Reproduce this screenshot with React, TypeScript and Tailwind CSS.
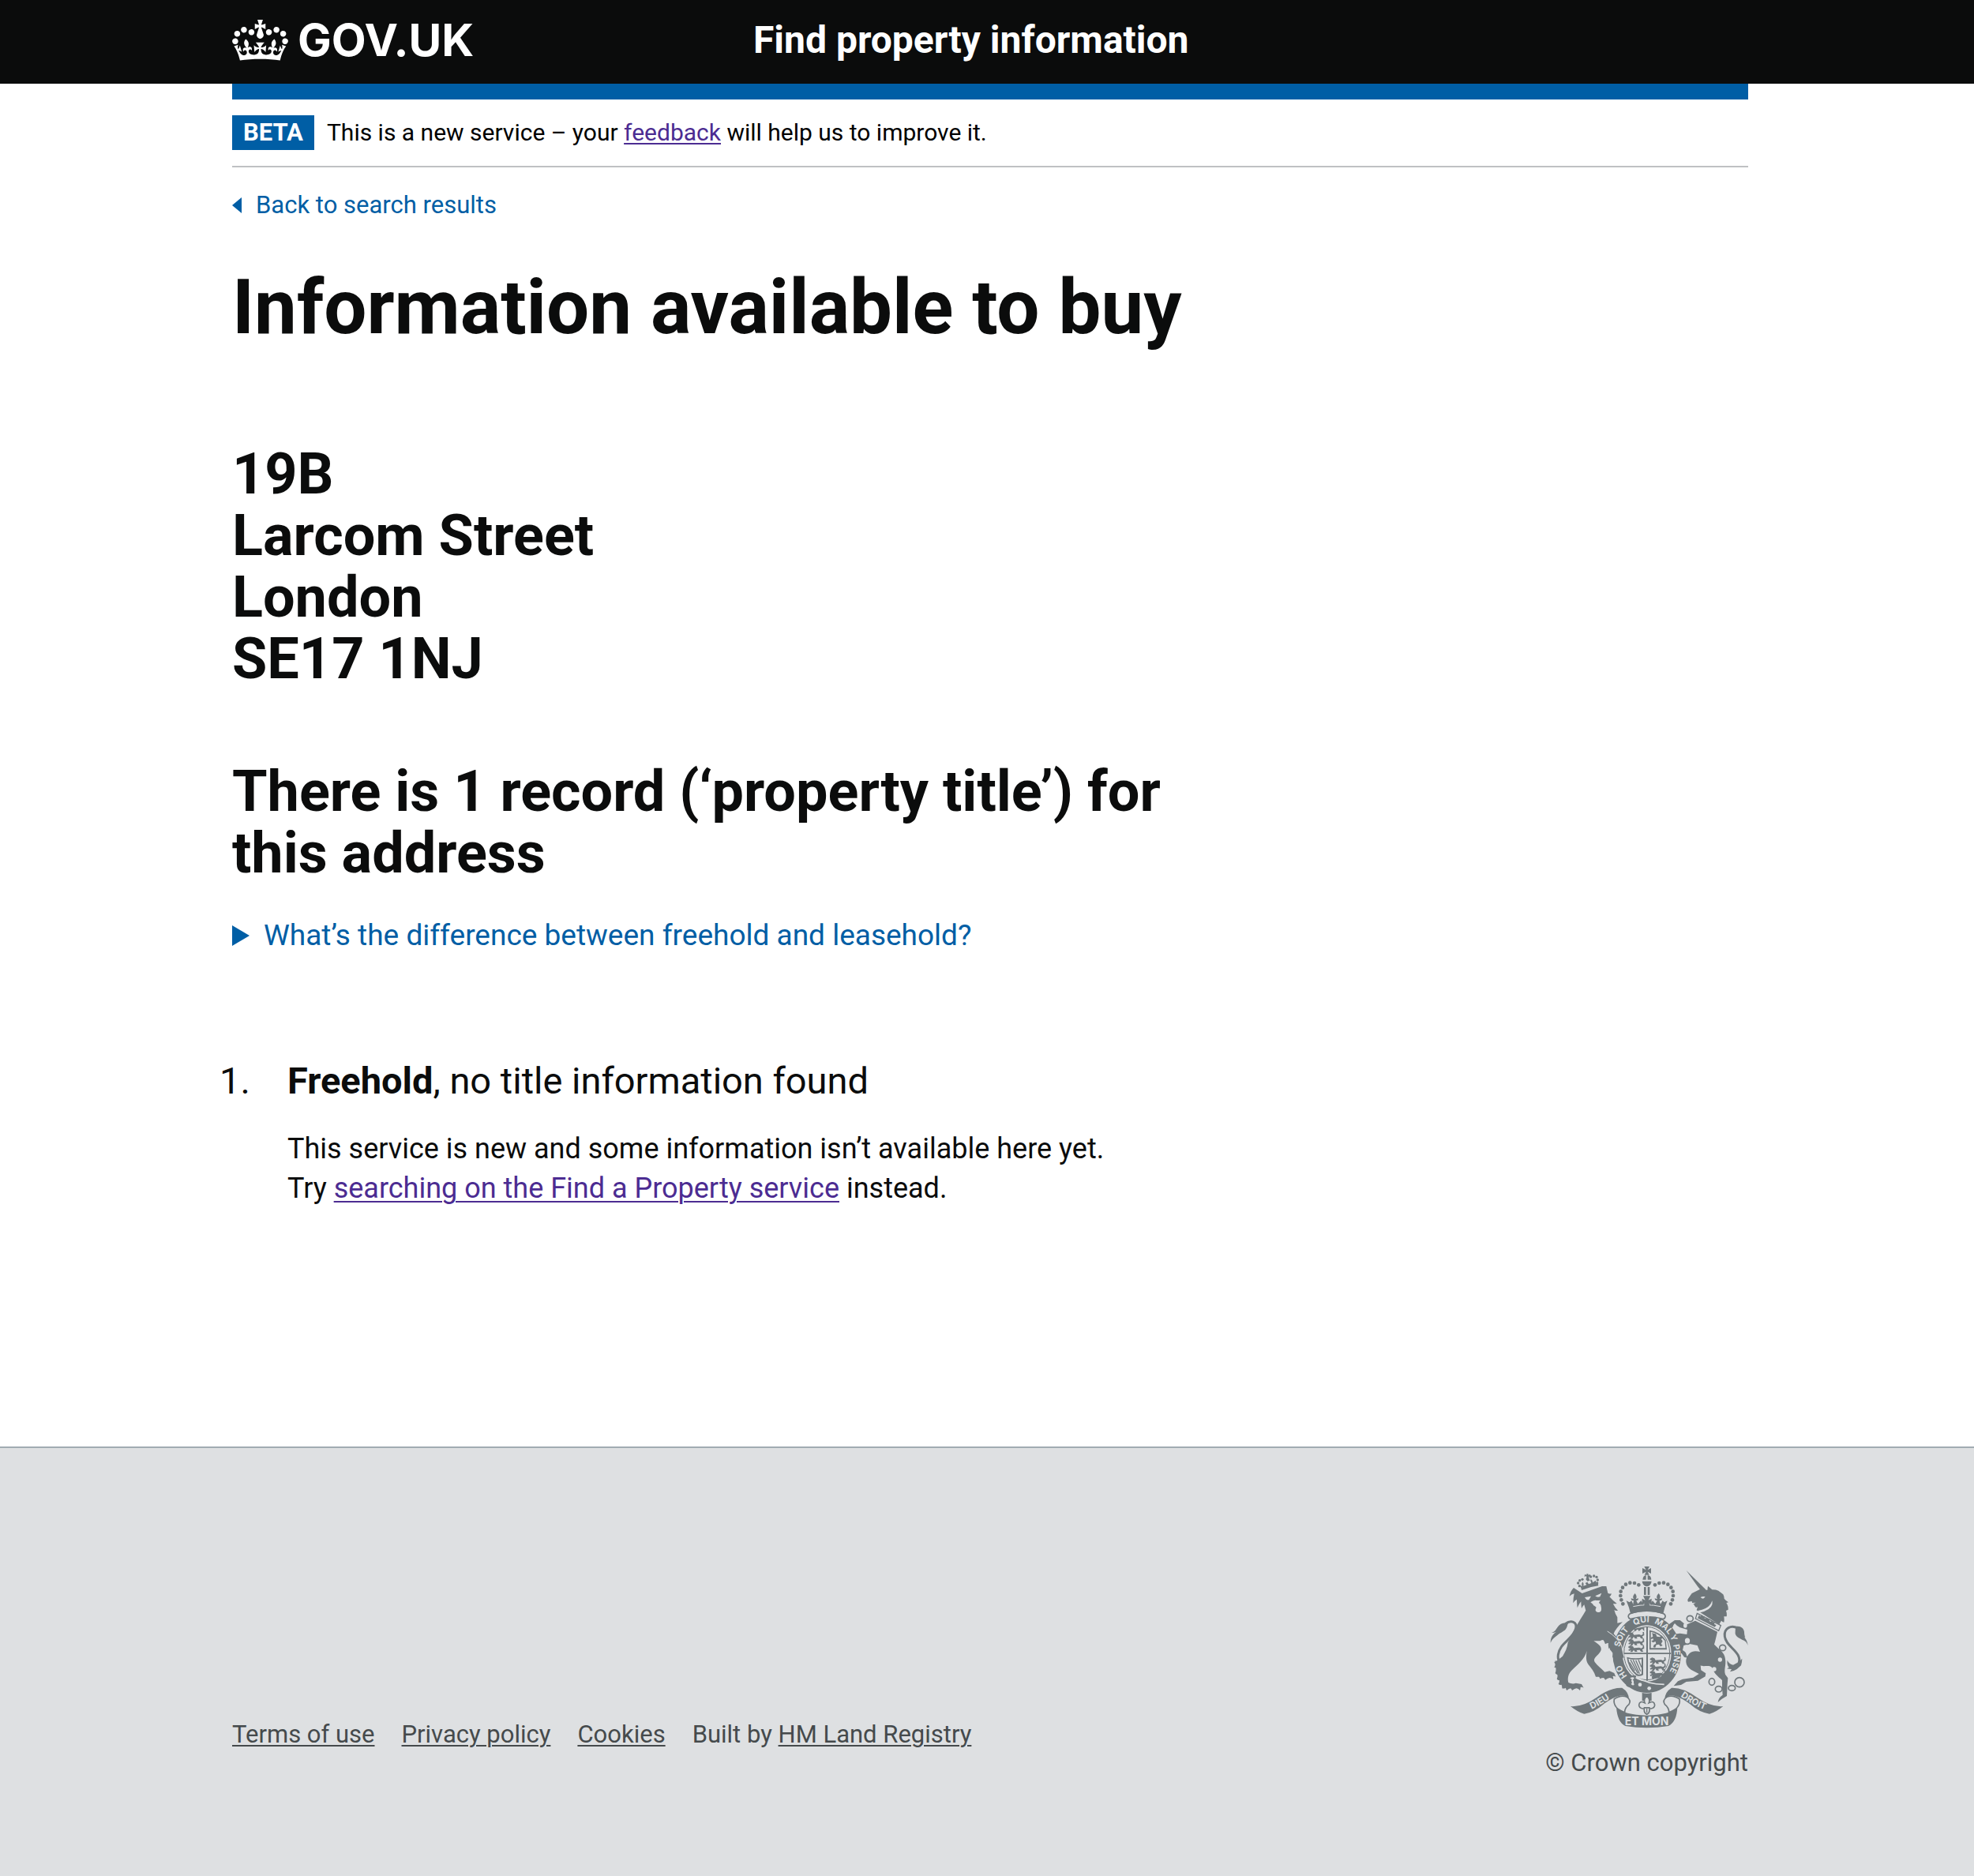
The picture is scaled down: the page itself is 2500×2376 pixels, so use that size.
import type { ReactNode } from 'react';

const INK = '#6f777b';
const PAPER = '#dee0e2';

function CrownLogo() {
  return (
    <svg viewBox="0 0 132 97" className="h-[52px] w-[71px] shrink-0" fill="currentColor" aria-hidden="true">
      <path
        fillRule="evenodd"
        d="M25 30.2c3.5 1.5 7.7-.2 9.1-3.7 1.5-3.6-.2-7.8-3.9-9.2-3.6-1.4-7.6.3-9.1 3.9-1.4 3.5.3 7.5 3.9 9zM9 39.5c3.6 1.5 7.8-.2 9.2-3.7 1.5-3.6-.2-7.8-3.9-9.1-3.6-1.5-7.6.2-9.1 3.8-1.4 3.5.3 7.5 3.8 9zM4.4 57.2c3.5 1.5 7.7-.2 9.1-3.8 1.5-3.6-.2-7.7-3.9-9.1-3.5-1.5-7.6.3-9.1 3.8-1.4 3.5.3 7.6 3.9 9.1zm38.3-21.4c3.5 1.5 7.7-.2 9.1-3.8 1.5-3.6-.2-7.7-3.9-9.1-3.6-1.5-7.6.3-9.1 3.8-1.3 3.6.4 7.7 3.9 9.1zm64.4-5.6c-3.6 1.5-7.8-.2-9.1-3.7-1.5-3.6.2-7.8 3.8-9.2 3.6-1.4 7.7.3 9.2 3.9 1.3 3.5-.4 7.5-3.9 9zm15.9 9.3c-3.6 1.5-7.7-.2-9.1-3.7-1.5-3.6.2-7.8 3.7-9.1 3.6-1.5 7.7.2 9.2 3.8 1.5 3.5-.3 7.5-3.8 9zm4.7 17.7c-3.6 1.5-7.8-.2-9.2-3.8-1.5-3.6.2-7.7 3.9-9.1 3.6-1.5 7.7.3 9.2 3.8 1.3 3.5-.4 7.6-3.9 9.1zM89.3 35.8c-3.6 1.5-7.8-.2-9.2-3.8-1.4-3.6.2-7.7 3.9-9.1 3.6-1.5 7.7.3 9.2 3.8 1.4 3.6-.3 7.7-3.9 9.1zM69.7 17.7l8.9 4.7V9.3l-8.9 2.8c-.2-.3-.5-.6-.9-.9L72.4 0H59.6l3.5 11.2c-.3.3-.6.5-.9.9l-8.8-2.8v13.1l8.8-4.7c.3.3.6.7.9.9l-5 15.4v.1c-.2.8-.4 1.6-.4 2.4 0 4.1 3.1 7.5 7 8.1h.2c.3 0 .7.1 1 .1.4 0 .7 0 1-.1h.2c4-.6 7.1-4.1 7.1-8.1 0-.8-.1-1.7-.4-2.4V34l-5.1-15.4c.4-.2.7-.6 1-.9zM66 92.8c16.9 0 32.8 1.1 47.1 3.2 4-16.9 8.9-26.7 14-33.5l-9.6-3.4c1 4.9 1.1 7.2 0 10.2-1.5-1.4-3-4.3-4.2-8.7L108.6 76c2.8-2 5-3.2 7.5-3.3-4.4 9.4-10 11.9-13.6 11.2-4.3-.8-6.3-4.6-5.6-7.9 1-4.7 5.7-5.9 8-.5 4.3-8.7-3-11.4-7.6-8.8 7.1-7.2 7.9-13.5 2.1-21.1-8 6.1-8.1 12.3-4.5 20.8-4.7-5.4-12.1-2.5-9.5 6.2 3.4-5.2 7.9-2 7.2 3.1-.6 4.3-6.4 7.8-13.5 7.2-10.3-.9-10.9-8-11.2-13.8 2.5-.5 7.1 1.8 11 7.3L80.2 60c-4.1 4.4-8 5.3-12.3 5.4 1.4-4.4 8-11.6 8-11.6H55.5s6.4 7.2 7.9 11.6c-4.2-.1-8-1-12.3-5.4l1.4 16.4c3.9-5.5 8.5-7.7 10.9-7.3-.3 5.8-.9 12.8-11.1 13.8-7.2.6-12.9-2.9-13.5-7.2-.7-5 3.8-8.3 7.1-3.1 2.7-8.7-4.6-11.6-9.4-6.2 3.7-8.5 3.6-14.7-4.6-20.8-5.8 7.6-5 13.9 2.2 21.1-4.7-2.6-11.9.1-7.7 8.8 2.3-5.5 7.1-4.2 8.1.5.7 3.3-1.3 7.1-5.7 7.9-3.5.7-9-1.8-13.5-11.2 2.5.1 4.7 1.3 7.5 3.3l-4.7-15.4c-1.2 4.4-2.7 7.2-4.3 8.7-1.1-3-.9-5.3 0-10.2l-9.5 3.4c5 6.9 9.9 16.7 14 33.5 14.8-2.1 30.8-3.2 47.7-3.2z"
      />
    </svg>
  );
}

const pearls: [number, number][] = [
  [347, 190], [341, 175], [338, 159], [339, 143], [346, 128], [358, 116], [374, 110], [391, 111], [407, 118],
];

const crownPearls: [number, number][] = [
  [182, 122], [177, 111], [183, 101], [193, 97], [225, 87], [237, 84], [247, 88], [251, 99], [249, 111],
];

const garter: [string, number][] = [
  ['HO', 110], ['SOIT', 239], ['QUI', 332], ['MAL', 416], ['Y', 470], ['PENSE', 546],
];

/* Three walking lions, stacked, for the first and fourth quarters. */
function Lions({ x, y }: { x: number; y: number }) {
  return (
    <g transform={`translate(${x} ${y})`}>
      {[0, 25, 50].map((dy) => (
        <path
          key={dy}
          transform={`translate(0 ${dy})`}
          d="M2 4l8-4 9 3 4 7 20-2 8 3 6-4-1-8h5l1 12-8 5 5 8h-9l-5-7-12 1 3 6h-9l-5-7-5 8h-8l3-7-8 3-2-5 8-4-8-3z"
        />
      ))}
    </g>
  );
}

function RoyalArms() {
  return (
    <svg viewBox="70 45 753 618" className="h-[206px] w-[251px]" fill={INK} role="img" aria-label="Royal coat of arms">
      {/* lion tail */}
      <path d="M72 338c0-22 10-34 22-42-6 2-12 4-18 4 12-4 16-12 23-22 8-12 24-18 40-14-4 6-2 12-8 20-6 10-20 14-32 24-10 8-20 14-27 30z" />
      <path d="M128 266c22-16 46-8 40 18-6 28-38 46-54 68-14 20-18 44-8 58 12 10 32 4 48-10" fill="none" stroke={INK} strokeWidth="9" />
      <path d="M88 404c8 6 14 6 22 4l20 10 24-12-6 16c-8 8-20 12-34 12 4-2 6-3 8-6-14 0-22-4-28-12h10c-8-3-12-6-16-12z" />
      {/* lion */}
      <path d="M192 150l76-27 16 0 6 26q8 4 14 2-2 8-8 12 14 16 28 26-8 2-14 0 6 16 18 26-8 2-14-2 4 16 12 28v22q10-2 20-4-12 10-22 24-8 10-12 20l32 38 8 32-2 20-14 6q-2-6-2-10-6 2-10 10-6-4-4-12-6 4-12 6 0-8 4-16-6-2-8-8 2-8 0-16-6 2-10 8-4-10-2-22-6 0-12 4-2-10-8-16-6 0-12 4l-24 0c22 14 30 22 28 34-4 18-34 28-24 46 10 14 24 24 38 38l18-4 18 8 6 14q-6-4-12-2 4 6 2 12-6-6-14-6-8 2-16 8-2-4-6-8-8 0-14 4 0-4-4-8l-12 0c-6-20-18-34-28-46-12-16-8-38-6-52-8 32-36 52-58 74-14 14-16 32-12 46 8 4 20 6 28 2l22 4 8 14q-6-4-12-2 0 6-2 12-6-8-14-8-8 2-16 8-2-6-6-8-8 2-14 8-4-4-4-10-8 4-14 2 0-8-2-14-6 2-12-2 4-6 4-14-8 0-10-6 4-8 2-16-6-2-8-6 4-10 2-20l-6-2q4-6 4-12l-4-8 12-6 20-16c10-16 18-32 20-52l28-56c14-24 28-46 40-66l-6-22q-6 6-10 14-2-14-2-26-8 10-14 24-2-16-2-32-8 4-14 14 0-18 4-36-10 2-18 10c2-12 8-24 16-32z" />
      <path d="M202 165l24-4-8 14c-8 2-12-4-16-10zM242 160l24-11-6 14c-8 2-14 1-18-3zM224 184q10-8 18-8 10 2 20 0-4 4-6 10 8 6 8 14c4 16-2 24-12 22-12-2-10-12-6-18-4-6-14-8-12-12z" fill={PAPER} />
      {/* lion crown */}
      <path d="M189 142q30-16 66-20" fill="none" stroke={PAPER} strokeWidth="3" />
      <path d="M188 130q30-14 64-17l2 8q-34 4-64 17z" />
      <path d="M188 130l-6-12 10 6q-4-10 2-18 6 8 3 16l12-4-5-7 8-4 5 8 10-4q-6-8-2-16 8 6 7 14l12-8 2 17z" />
      <path d="M206 96l3-5-1-7-7 3 1-9 7 2 0-4 6 0 1 4 7-2 2 9-7-1 0 8 4 7-10 3z" />
      {crownPearls.map(([x, y]) => (
        <circle key={`${x}-${y}`} cx={x} cy={y} r="5" />
      ))}

      {/* garter and shield */}
      <ellipse cx="438" cy="380" rx="130" ry="148" />
      <ellipse cx="438" cy="378" rx="93" ry="107" fill={PAPER} />
      <ellipse cx="438" cy="378" rx="87" ry="101" fill="none" stroke={INK} strokeWidth="3" />
      <path d="M436 276h6v206h-6zM348 376h182v5H348z" />
      <Lions x={366} y={298} />
      <Lions x={448} y={394} />
      <path d="M388 286l6 8 8-10 6 10 12-10 8 10v-14q-20-2-40 6zM456 468l6-8 34-4-10 14-26 6z" />
      <path d="M448 290q40 6 62 38l4 36h-66zm5 6v62h56l-3-28q-22-28-53-34z" fillRule="evenodd" />
      <path d="M458 300q6 4 14 4l4 10 12 2 6-6 6 8-8 6q4 4 6 8-4 6-6 10l6 6-8 4-6-8-10 2-4 10-8-1 3-9 8-5-2-8-10 4-6-6 8-3-1-6-9 2 0-6 8-3z" />
      <path d="M362 392q28 8 62 2v66q-14 8-26 2-32-28-36-70zm6 6q6 34 32 58 8 4 18 0v-56q-28 4-50-2z" fillRule="evenodd" />
      <path d="M376 402l28 52M386 403l24 52M396 404l18 42M406 403l12 28M372 412l20 32" fill="none" stroke={INK} strokeWidth="4" />
      {/* strap and buckle */}
      <path d="M396 466q44 30 108 30" fill="none" stroke={PAPER} strokeWidth="5" />
      <path d="M368 466q18-8 30-2l-4 10q50 26 102 28l-24 16q-48 8-88-14-18 8-26-6 6-2 8-8-6-4-4-10z" />
      <path d="M374 472q10-6 16-2 0 6-6 8 6 4 4 12l2 8q-8 4-12-4l4-4q-6-10 0-12z" fill={PAPER} />
      <circle cx="412" cy="497" r="7" fill={PAPER} />
      <circle cx="447" cy="511" r="7" fill={PAPER} />
      {/* lion forepaw lies over the garter */}
      <path d="M288 296l44 36 14 36 4 24-12 14-6-10-10 10-2-14-12 2 2-16-12-14z" />
      <path d="M288 294q36 22 54 54 4 24 10 42" fill="none" stroke={PAPER} strokeWidth="3" />

      {/* imperial crown */}
      <path d="M373 228q65-24 130 0 12 10-2 20-63-18-126 0-14-10-2-20z" fill={PAPER} stroke={INK} strokeWidth="5" />
      <path d="M360 178l12 6 8-6 6 14 8-22 10 20 12-12 10 14 12-14 12 14 10-14 10 12 12-20 8 22 8-14 6 6 12-6-10 26-6 24q-62-18-124 0l-6-24z" />
      <path d="M386 200q52-12 104 0" fill="none" stroke={PAPER} strokeWidth="3" />
      <path d="M393 150q10 12 3 22l10-3q0 10-10 9l2 12h-12l2-12q-10 1-10-9l10 3q-7-10 5-22zM483 150q10 12 3 22l10-3q0 10-10 9l2 12h-12l2-12q-10 1-10-9l10 3q-7-10 5-22z" />
      <path d="M427 126h8v30h-8zM441 126h8v30h-8zM424 160h28l-8 16 12-6v24l-12-8 6 14h-24l6-14-12 8v-24l12 6z" />
      <path d="M420 104h36q-2 18-18 20-16-2-18-20zM422 98q2-16 13-17v17zM441 98v-17q13 1 14 17z" />
      <path d="M428 48h20l-7 13 13-7v21l-13-7 6 12h-18l6-12-14 7v-21l14 7z" />
      {pearls.map(([x, y]) => (
        <g key={`${x}-${y}`}>
          <circle cx={x} cy={y} r="7" />
          <circle cx={876 - x} cy={y} r="7" />
        </g>
      ))}

      {/* unicorn */}
      <path d="M588 63l74 73-12 12-20-26z" />
      <path d="M668 138l2-16 16 14q16 0 24 4l18 14q4 8 4 16 6 8 16 14l-8 2q8 12 7 26l-8 4q4 12 2 22l-10 0q2 12 0 22-6-2-10-6l-8 14-20-12-66-42 4-12-6 2q-6-4-8-12l-6-2-2-10-14 2q-4-6 0-12l14-20 36-18z" />
      <path d="M642 165q8-4 18-2-4 6-8 7-6 0-10-5zM686 178q8 34-50 46l-4-8q46-8 54-38z" fill={PAPER} />
      <path d="M604 187q8-2 20-2l-12 7z" fill={PAPER} />
      <path d="M629 226l90 46-8 20-88-46z" fill={PAPER} stroke={INK} strokeWidth="4" />
      <path d="M632 243l4-10 6 5 5-6 5 6 6-1-2 7 6 3 4-5 5 6 6 0-2 7 6 3 4-4 5 6 6 0-2 7 8 4-6 7-66-34z" />
      <path d="M622 254l84 42-8 34-4 14c18 20 40 28 42 56 4 24-6 38 0 58l10 14-2 24-2 44-20 12-14 12c2-14 8-22 18-28l-2-30 0-26c-18-16-28-22-36-44-10-18-34-4-46-12l2 18 18 12-2 12-28 16-44 4-20 12-28 4 16-18 18-8 40-6 22-14c-10-6-18-10-30-16-24-16-24-42-8-60 14-14 30-10 42-8l-10-24-30-6-22 6-4 18q8 4 12 10l6 18q-8 0-12-2l-10-14-14-2-4-16-18-8q6-14 8-30-10 2-18 6l-4-8 16-14 28-4 26 4 2-18-28-8q-12-6-20-16-6 6-8 14l-16 4q0-8 4-16l20-14 20 0 22 18z" />
      {/* unicorn tail */}
      <path d="M822 348c-6-18-16-18-26-24-14-8-24-14-22-28 0-8 2-16 0-20 20-4 32 6 34 20 0 10 2 16 4 22l-4-2c8 10 12 18 14 32z" />
      <path d="M782 282c-22-12-52-2-48 32 4 30 34 44 50 70 12 22 4 42-18 48" fill="none" stroke={INK} strokeWidth="9" />
      <path d="M744 404c4 10 12 16 22 18l22-12 12-12q0 14-4 26l-16 14q-12 8-26 10l6-10q-10 0-18-2l8-4c-6-8-8-18-6-28z" />
      {/* chain */}
      <g fill="none" stroke={INK} strokeWidth="5">
        <ellipse cx="602" cy="246" rx="12" ry="11" />
        <ellipse cx="726" cy="357" rx="12" ry="11" />
        <ellipse cx="685" cy="486" rx="11" ry="13" />
        <ellipse cx="711" cy="514" rx="13" ry="11" />
        <ellipse cx="761" cy="510" rx="13" ry="10" />
        <circle cx="790" cy="488" r="18" />
      </g>
      <g fill={PAPER}>
        <ellipse cx="584" cy="272" rx="7" ry="9" />
        <ellipse cx="592" cy="330" rx="12" ry="13" stroke={INK} strokeWidth="5" />
        <circle cx="716" cy="402" r="8" />
        <circle cx="694" cy="438" r="8" />
      </g>

      {/* garter motto */}
      <path id="garter-line" d="M438 500A104 120 0 0 1 438 260A104 120 0 0 1 438 500" fill="none" />
      <g fill={PAPER} fontFamily="Inter, sans-serif" fontWeight="700" fontSize="32" textAnchor="middle">
        {garter.map(([word, at]) => (
          <text key={word}>
            <textPath href="#garter-line" startOffset={at}>{word}</textPath>
          </text>
        ))}
      </g>

      {/* motto ribbon */}
      <path d="M148 579q46 4 100-34 52-38 96-36 26 16 26 44-14-20-36-14-30 8-60 32-36 32-74 37-24-6-52-29z" />
      <path d="M728 579q-46 4-100-34-52-38-96-36-26 16-26 44 14-20 36-14 30 8 60 32 36 32 74 37 24-6 52-29z" />
      <path d="M322 582q28 30 116 32 88-2 116-32-2 56-34 72-82 14-164 0-30-14-34-72z" />
      <path d="M314 552q-6 34 40 50 0-18 16-30 10-16-8-28-22-10-48 8zM562 552q6 34-40 50 0-18-16-30-10-16 8-28 22-10 48 8z" fill={PAPER} stroke={INK} strokeWidth="5" />
      <path id="ribbon-left" d="M200 601Q262 580 322 532" fill="none" />
      <path id="ribbon-right" d="M550 530Q612 578 676 599" fill="none" />
      <g fill={PAPER} fontFamily="Inter, sans-serif" fontWeight="700" textAnchor="middle">
        <text fontSize="34"><textPath href="#ribbon-left" startOffset="50%">DIEU</textPath></text>
        <text fontSize="34"><textPath href="#ribbon-right" startOffset="50%">DROIT</textPath></text>
        <text x="438" y="651" fontSize="42">ET MON</text>
      </g>
      {/* pendant */}
      <path d="M420 528q18 4 36 0v30h-36z" />
      <path d="M438 540q14 14 8 26 20-10 22 8 0 12-14 14l-6 0q2 16-10 22-12-6-10-22h-6q-14-2-14-14 2-18 22-8-6-12 8-26z" fill={PAPER} stroke={INK} strokeWidth="5" />
      <path d="M426 582h24v5h-24zM436 588h4v16h-4z" />
    </svg>
  );
}

function Container({ children, className = '' }: { children: ReactNode; className?: string }) {
  return (
    <div className="pl-2">
      <div className={`mx-auto w-full max-w-[1920px] ${className}`}>{children}</div>
    </div>
  );
}

const footerLinks = ['Terms of use', 'Privacy policy', 'Cookies'];
const footerLink = 'underline decoration-2 underline-offset-3';

export default function App() {
  return (
    <div className="flex min-h-screen flex-col bg-white font-[Roboto,sans-serif] text-[#0b0c0c]">
      <header className="bg-[#0b0c0c] text-white">
        <Container className="flex h-[106px] items-center pb-1">
          <div className="w-1/3">
            <a href="#" className="flex items-center gap-3">
              <CrownLogo />
              <span className="font-[Inter,sans-serif] text-[57px] leading-[56px] font-bold">GOV.UK</span>
            </a>
          </div>
          <a href="#" className="pl-5 text-5xl leading-[50px] font-bold">
            Find property information
          </a>
        </Container>
      </header>

      <Container>
        <div className="h-5 bg-[#005ea5]" />
        <div className="flex items-center gap-4 border-b-2 border-[#bfc1c3] py-5 text-[30px] leading-[44px]">
          <strong className="bg-[#005ea5] px-[14px] text-[31px] font-bold text-white">BETA</strong>
          <p className="text-black">
            This is a new service – your{' '}
            <a href="#" className="text-[#4c2c92] underline decoration-2 underline-offset-3">feedback</a> will help us to improve it.
          </p>
        </div>
        <a href="#" className="mt-7 flex w-fit items-center gap-[18px] text-[31px] leading-10 text-[#005ea5]">
          <svg viewBox="0 0 12 20" className="h-5 w-3" fill="currentColor" aria-hidden="true">
            <path d="M12 0v20L0 10z" />
          </svg>
          Back to search results
        </a>
      </Container>

      <main className="grow pb-[302px]">
        <Container>
          <h1 className="mt-[59px] text-8xl leading-[100px] font-bold">Information available to buy</h1>
          <div className="max-w-[1280px]">
            <h2 className="mt-[123px] text-7xl leading-[78px] font-bold">
              19B
              <br />
              Larcom Street
              <br />
              London
              <br />
              SE17 1NJ
            </h2>
            <h2 className="mt-[90px] text-7xl leading-[78px] font-bold">
              There is 1 record (‘property title’) for this address
            </h2>
            <details className="mt-10 text-[37px] leading-[50px]">
              <summary className="flex w-fit cursor-pointer list-none items-center gap-[18px] text-[#005ea5]">
                <svg viewBox="0 0 22 26" className="h-[26px] w-[22px]" fill="currentColor" aria-hidden="true">
                  <path d="M0 0v26l22-13z" />
                </svg>
                What’s the difference between freehold and leasehold?
              </summary>
              <p className="mt-4">Freehold means owning the land; leasehold means owning it for a set term.</p>
            </details>
            <ol className="mt-[129px]">
              <li className="flex">
                <span className="-ml-4 w-[86px] shrink-0 text-[47px] leading-[60px]">1.</span>
                <div>
                  <h3 className="text-[47px] leading-[60px]">
                    <strong className="font-bold">Freehold</strong>, no title information found
                  </h3>
                  <p className="mt-[31px] text-4xl leading-[50px]">
                    This service is new and some information isn’t available here yet.
                    <br />
                    Try{' '}
                    <a href="#" className="text-[#4c2c92] underline decoration-2 underline-offset-4">
                      searching on the Find a Property service
                    </a>{' '}
                    instead.
                  </p>
                </div>
              </li>
            </ol>
          </div>
        </Container>
      </main>

      <footer className="border-t-2 border-[#a1acb2] bg-[#dee0e2] pt-[149px] pb-[124px] text-[#454a4c]">
        <Container className="flex items-end justify-between">
          <ul className="flex gap-x-[34px] pb-9 text-[31px] leading-10">
            {footerLinks.map((label) => (
              <li key={label}>
                <a href="#" className={footerLink}>{label}</a>
              </li>
            ))}
            <li>
              Built by <a href="#" className={footerLink}>HM Land Registry</a>
            </li>
          </ul>
          <a href="#" className="flex flex-col items-end gap-6 text-[31px] leading-10">
            <RoyalArms />
            © Crown copyright
          </a>
        </Container>
      </footer>
    </div>
  );
}
